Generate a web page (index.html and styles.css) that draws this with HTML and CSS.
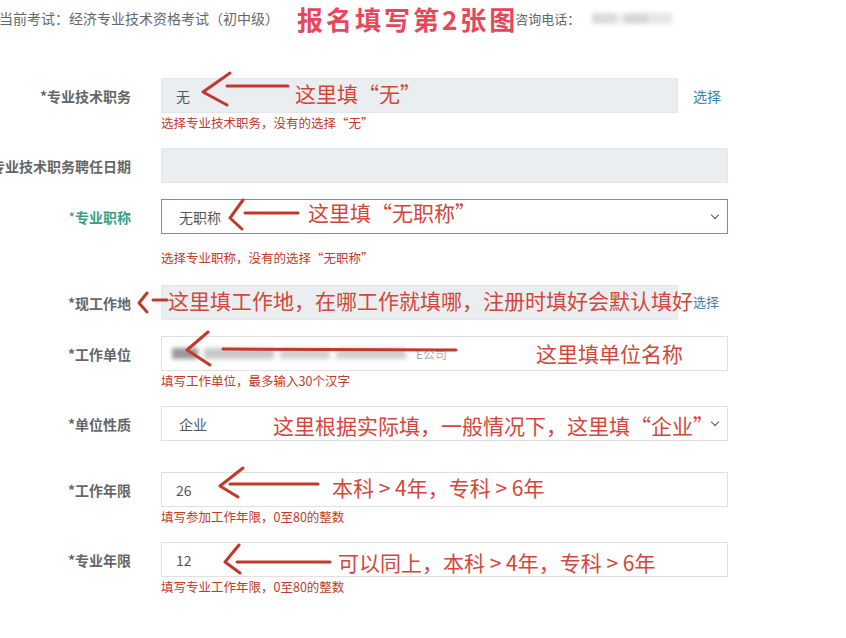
FILE: index.html
```html
<!DOCTYPE html>
<html>
<head>
  <title>报名填写</title>
  <meta charset="utf-8">
  <meta name="viewport" content="width=device-width, initial-scale=1.0">
  <link rel="stylesheet" href="styles.css">
</head>
<body>

  <div class="top">
    <span class="exam">当前考试：经济专业技术资格考试（初中级）</span>
    <span class="title">报名填写第2张图</span>
    <span class="tel">咨询电话：</span>
    <span class="blurbox"></span>
  </div>

  <div class="form">
    <div class="group">
      <div class="label">*专业技术职务</div>
      <div class="pick">
        <div class="field gray narrow">无</div>
        <a class="choose">选择</a>
      </div>
      <div class="hint">选择专业技术职务，没有的选择“无”</div>
    </div>

    <div class="group">
      <div class="label">专业技术职务聘任日期</div>
      <div class="field gray"></div>
    </div>

    <div class="group tall">
      <div class="label teal"><span class="star">*</span>专业职称</div>
      <div class="field select active">无职称<span class="chev"></span></div>
      <div class="hint spaced">选择专业职称，没有的选择“无职称”</div>
    </div>

    <div class="group">
      <div class="label">*现工作地</div>
      <div class="pick">
        <div class="field gray narrow"></div>
        <a class="choose small">选择</a>
      </div>
    </div>

    <div class="group">
      <div class="label">*工作单位</div>
      <div class="field company">
        <span class="smear dark"></span>
        <span class="smear w1"></span>
        <span class="smear w2"></span>
        <span class="smear w3"></span>
        <span class="tail">E公司</span>
      </div>
      <div class="hint">填写工作单位，最多输入30个汉字</div>
    </div>

    <div class="group wide">
      <div class="label">*单位性质</div>
      <div class="field select">企业<span class="chev"></span></div>
    </div>

    <div class="group">
      <div class="label">*工作年限</div>
      <div class="field">26</div>
      <div class="hint">填写参加工作年限，0至80的整数</div>
    </div>

    <div class="group">
      <div class="label">*专业年限</div>
      <div class="field">12</div>
      <div class="hint">填写专业工作年限，0至80的整数</div>
    </div>
  </div>

  <!-- hand-drawn notes over the screenshot -->
  <div class="notes">
    <svg class="arrows" width="846" height="638" viewBox="0 0 846 638">
      <path d="M230 73 L203 92 L227 105 M227 86 L288 86"/>
      <path d="M243 200 L230 218 L242 229 M245 213 L298 213"/>
      <path d="M147 293 L139 303 L147 312 M153 300 L167 300"/>
      <path d="M208 332 L187 350 L210 365 M223 349 L456 350"/>
      <path d="M243 468 L220 486 L238 497 M230 484 L318 484"/>
      <path d="M239 545 L225 562 L240 573 M237 562 L330 562"/>
    </svg>
    <span class="note n1">这里填“无”</span>
    <span class="note n2">这里填“无职称”</span>
    <span class="note n3">这里填工作地，在哪工作就填哪，注册时填好会默认填好</span>
    <span class="note n4">这里填单位名称</span>
    <span class="note n5">这里根据实际填，一般情况下，这里填“企业”</span>
    <span class="note n6">本科 &gt; 4年，专科 &gt; 6年</span>
    <span class="note n7">可以同上，本科 &gt; 4年，专科 &gt; 6年</span>
  </div>

</body>
</html>
```

FILE: styles.css
```css
body {
  margin: 0;
  font-family: "Noto Sans CJK SC", "Noto Sans", sans-serif;
  color: #555;
  background: #fff;
  position: relative;
  width: 846px;
  height: 638px;
  overflow: hidden;
}

.top { display: flex; align-items: center; height: 36px; white-space: nowrap; }
.exam { font-size: 14px; color: #666; margin-left: -1px; }
.title {
  margin-left: 18px;
  font-size: 26px; font-weight: bold; color: #e8475b;
  letter-spacing: 3px;
}
.tel { font-size: 13px; color: #666; margin-left: -3px; }
.blurbox {
  display: inline-block; width: 80px; height: 11px; margin-left: 12px;
  background: linear-gradient(90deg, #dcdcdc 0 30%, #eee 30% 40%, #d8d8d8 40% 70%, #e6e6e6 70%);
  filter: blur(2px);
}

.form { padding-top: 42px; }

.group {
  display: grid;
  grid-template-columns: 131px 567px;
  column-gap: 30px;
  margin-bottom: 16px;
}
.group.tall { margin-bottom: 18px; }
.group.wide { margin-bottom: 31px; }

.label {
  display: flex; justify-content: flex-end; align-items: center;
  white-space: nowrap;
  font-size: 14px; font-weight: bold; color: #666;
}
.label.teal { color: #3a9f80; }
.label .star { color: #777; font-weight: normal; }

.field {
  box-sizing: border-box;
  height: 35px;
  border: 1px solid #e0e0e0;
  background: #fff;
  display: flex; align-items: center;
  padding-left: 14px;
  font-size: 14px; color: #555;
}
.field.gray { background: #eaeef0; border-color: #e4e7e9; }
.field.narrow { width: 517px; }
.field.select { padding-left: 17px; position: relative; }
.field.active { border-color: #4fa98b; }
.chev {
  position: absolute; right: 9px; top: 12px;
  width: 5px; height: 5px;
  border-right: 1.5px solid #555; border-bottom: 1.5px solid #555;
  transform: rotate(45deg);
}

.pick { display: flex; align-items: center; gap: 15px; }
.choose { color: #3a85a8; font-size: 14px; }
.choose.small { font-size: 13px; margin-top: -3px; }

.company { gap: 0; padding-left: 10px; }
.smear { display: inline-block; height: 11px; background: #c8c8c8; filter: blur(2px); margin-right: 6px; }
.smear.dark { width: 26px; background: #999; }
.smear.w1 { width: 70px; }
.smear.w2 { width: 50px; background: #d2d2d2; }
.smear.w3 { width: 70px; background: #d0d0d0; }
.tail { font-size: 12px; color: #aaa; margin-left: 4px; }

.hint {
  grid-column: 2;
  font-size: 12.5px; color: #c0392b;
  height: 18px; line-height: 18px; margin-top: 1px;
}
.hint.spaced { margin-top: 15px; }

.notes { position: absolute; left: 0; top: 0; width: 846px; height: 638px; pointer-events: none; }
.arrows { position: absolute; left: 0; top: 0; }
.arrows path { fill: none; stroke: #c0392b; stroke-width: 3; stroke-linecap: round; stroke-linejoin: round; }
.note {
  position: absolute; white-space: nowrap;
  font-size: 21px; line-height: 26px; color: #d2463b;
}
.n1 { left: 295px; top: 80px; }
.n2 { left: 308px; top: 199px; }
.n3 { left: 168px; top: 287px; }
.n4 { left: 536px; top: 340px; }
.n5 { left: 273px; top: 412px; }
.n6 { left: 332px; top: 474px; }
.n7 { left: 338px; top: 549px; }
```
